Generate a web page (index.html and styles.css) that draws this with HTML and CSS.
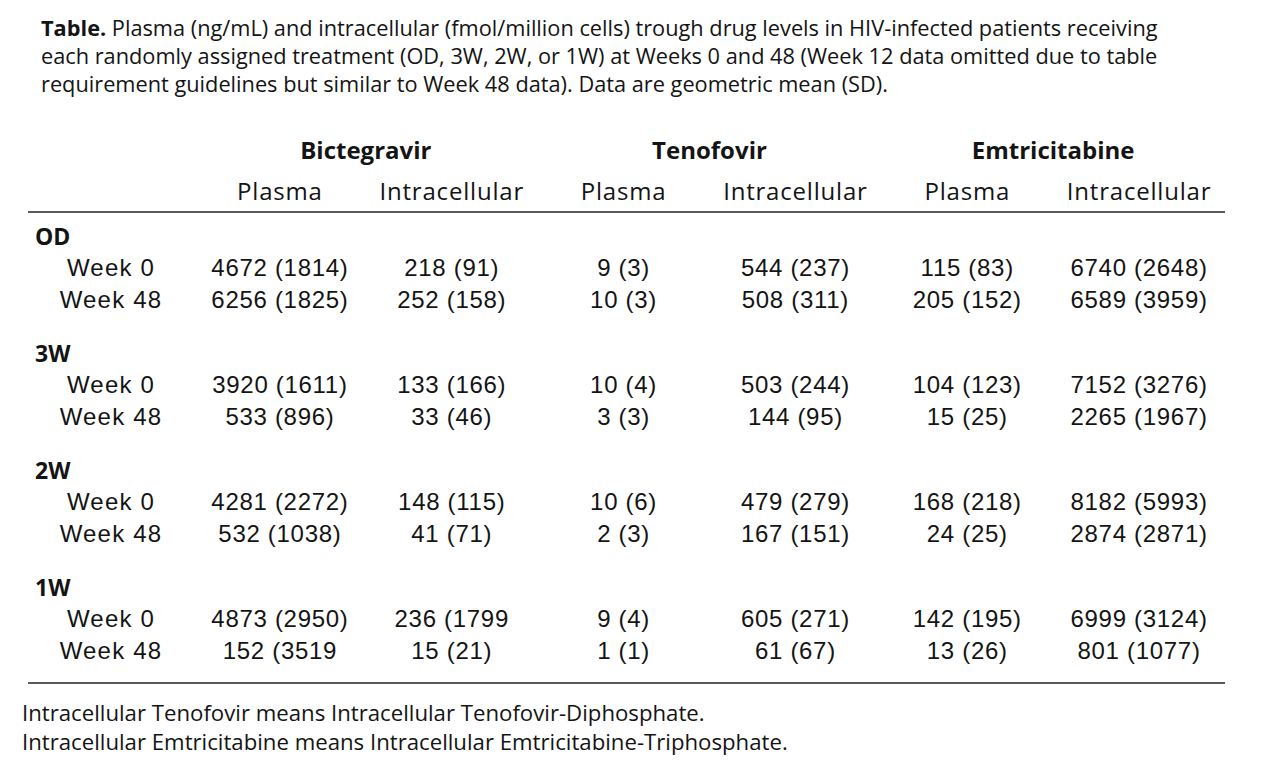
FILE: index.html
```html
<!DOCTYPE html>
<html>
<head>
<meta charset="utf-8">
<link rel="stylesheet" href="styles.css">
</head>
<body>
<div class="page">
  <p class="caption"><b>Table.</b> Plasma (ng/mL) and intracellular (fmol/million cells) trough drug levels in HIV-infected patients receiving<br>each randomly assigned treatment (OD, 3W, 2W, or 1W) at Weeks 0 and 48 (Week 12 data omitted due to table<br>requirement guidelines but similar to Week 48 data). Data are geometric mean (SD).</p>
  <table class="data">
    <colgroup>
      <col class="c-label"><col class="c-val"><col class="c-val"><col class="c-val"><col class="c-val"><col class="c-val"><col class="c-val">
    </colgroup>
    <thead>
      <tr class="h1">
        <th></th><th colspan="2">Bictegravir</th><th colspan="2">Tenofovir</th><th colspan="2">Emtricitabine</th>
      </tr>
      <tr class="h2">
        <th></th><th>Plasma</th><th>Intracellular</th><th>Plasma</th><th>Intracellular</th><th>Plasma</th><th>Intracellular</th>
      </tr>
    </thead>
    <tbody class="first">
      <tr class="grp"><td colspan="7">OD</td></tr>
      <tr><td class="wk">Week 0</td><td>4672 (1814)</td><td>218 (91)</td><td>9 (3)</td><td>544 (237)</td><td>115 (83)</td><td>6740 (2648)</td></tr>
      <tr><td class="wk">Week 48</td><td>6256 (1825)</td><td>252 (158)</td><td>10 (3)</td><td>508 (311)</td><td>205 (152)</td><td>6589 (3959)</td></tr>
    </tbody>
    <tbody>
      <tr class="grp"><td colspan="7">3W</td></tr>
      <tr><td class="wk">Week 0</td><td>3920 (1611)</td><td>133 (166)</td><td>10 (4)</td><td>503 (244)</td><td>104 (123)</td><td>7152 (3276)</td></tr>
      <tr><td class="wk">Week 48</td><td>533 (896)</td><td>33 (46)</td><td>3 (3)</td><td>144 (95)</td><td>15 (25)</td><td>2265 (1967)</td></tr>
    </tbody>
    <tbody>
      <tr class="grp"><td colspan="7">2W</td></tr>
      <tr><td class="wk">Week 0</td><td>4281 (2272)</td><td>148 (115)</td><td>10 (6)</td><td>479 (279)</td><td>168 (218)</td><td>8182 (5993)</td></tr>
      <tr><td class="wk">Week 48</td><td>532 (1038)</td><td>41 (71)</td><td>2 (3)</td><td>167 (151)</td><td>24 (25)</td><td>2874 (2871)</td></tr>
    </tbody>
    <tbody class="last">
      <tr class="grp"><td colspan="7">1W</td></tr>
      <tr><td class="wk">Week 0</td><td>4873 (2950)</td><td>236 (1799</td><td>9 (4)</td><td>605 (271)</td><td>142 (195)</td><td>6999 (3124)</td></tr>
      <tr class="end"><td class="wk">Week 48</td><td>152 (3519</td><td>15 (21)</td><td>1 (1)</td><td>61 (67)</td><td>13 (26)</td><td>801 (1077)</td></tr>
    </tbody>
  </table>
  <div class="notes">
    <p>Intracellular Tenofovir means Intracellular Tenofovir-Diphosphate.</p>
    <p>Intracellular Emtricitabine means Intracellular Emtricitabine-Triphosphate.</p>
  </div>
</div>
</body>
</html>
```
FILE: styles.css
```css
html, body {
  margin: 0;
  padding: 0;
  background: #ffffff;
}
.page {
  width: 1282px;
  height: 776px;
  color: #141414;
  font-family: "Open Sans", "Liberation Sans", sans-serif;
}
.caption {
  margin: 0;
  padding: 14px 0 0 41px;
  font-size: 21.75px;
  line-height: 28px;
  white-space: nowrap;
}
.caption b {
  font-weight: 700;
}
.data {
  margin: 31px 0 0 28px;
  width: 1197px;
  border-collapse: collapse;
  table-layout: fixed;
  font-family: "Liberation Sans", Arial, sans-serif;
  font-size: 24px;
}
.c-label { width: 166px; }
.c-val { width: 171.83px; }
.data th, .data td {
  padding: 0;
  text-align: center;
  white-space: nowrap;
}
.h1 th {
  height: 40px;
  font-family: "Open Sans", sans-serif;
  font-weight: 700;
  font-size: 24px;
}
.h2 th {
  height: 42px;
  font-weight: 400;
  font-family: "Open Sans", sans-serif;
  font-size: 24px;
  letter-spacing: 0.8px;
  border-bottom: 2px solid #5a5a5a;
}
.data td {
  height: 32px;
  line-height: 32px;
  letter-spacing: 0.7px;
}
.data td.wk {
  letter-spacing: 1.2px;
}
.grp td {
  text-align: left;
  padding-left: 7px;
  font-weight: 700;
  font-family: "Open Sans", sans-serif;
  font-size: 23px;
  letter-spacing: 0;
  padding-top: 21px;
}
.first .grp td {
  padding-top: 7px;
}
.end td {
  padding-bottom: 15px;
  border-bottom: 2px solid #5a5a5a;
}
.notes {
  padding: 14px 0 0 22px;
  font-size: 22.2px;
  line-height: 29px;
  white-space: nowrap;
}
.notes p {
  margin: 0;
}
```
